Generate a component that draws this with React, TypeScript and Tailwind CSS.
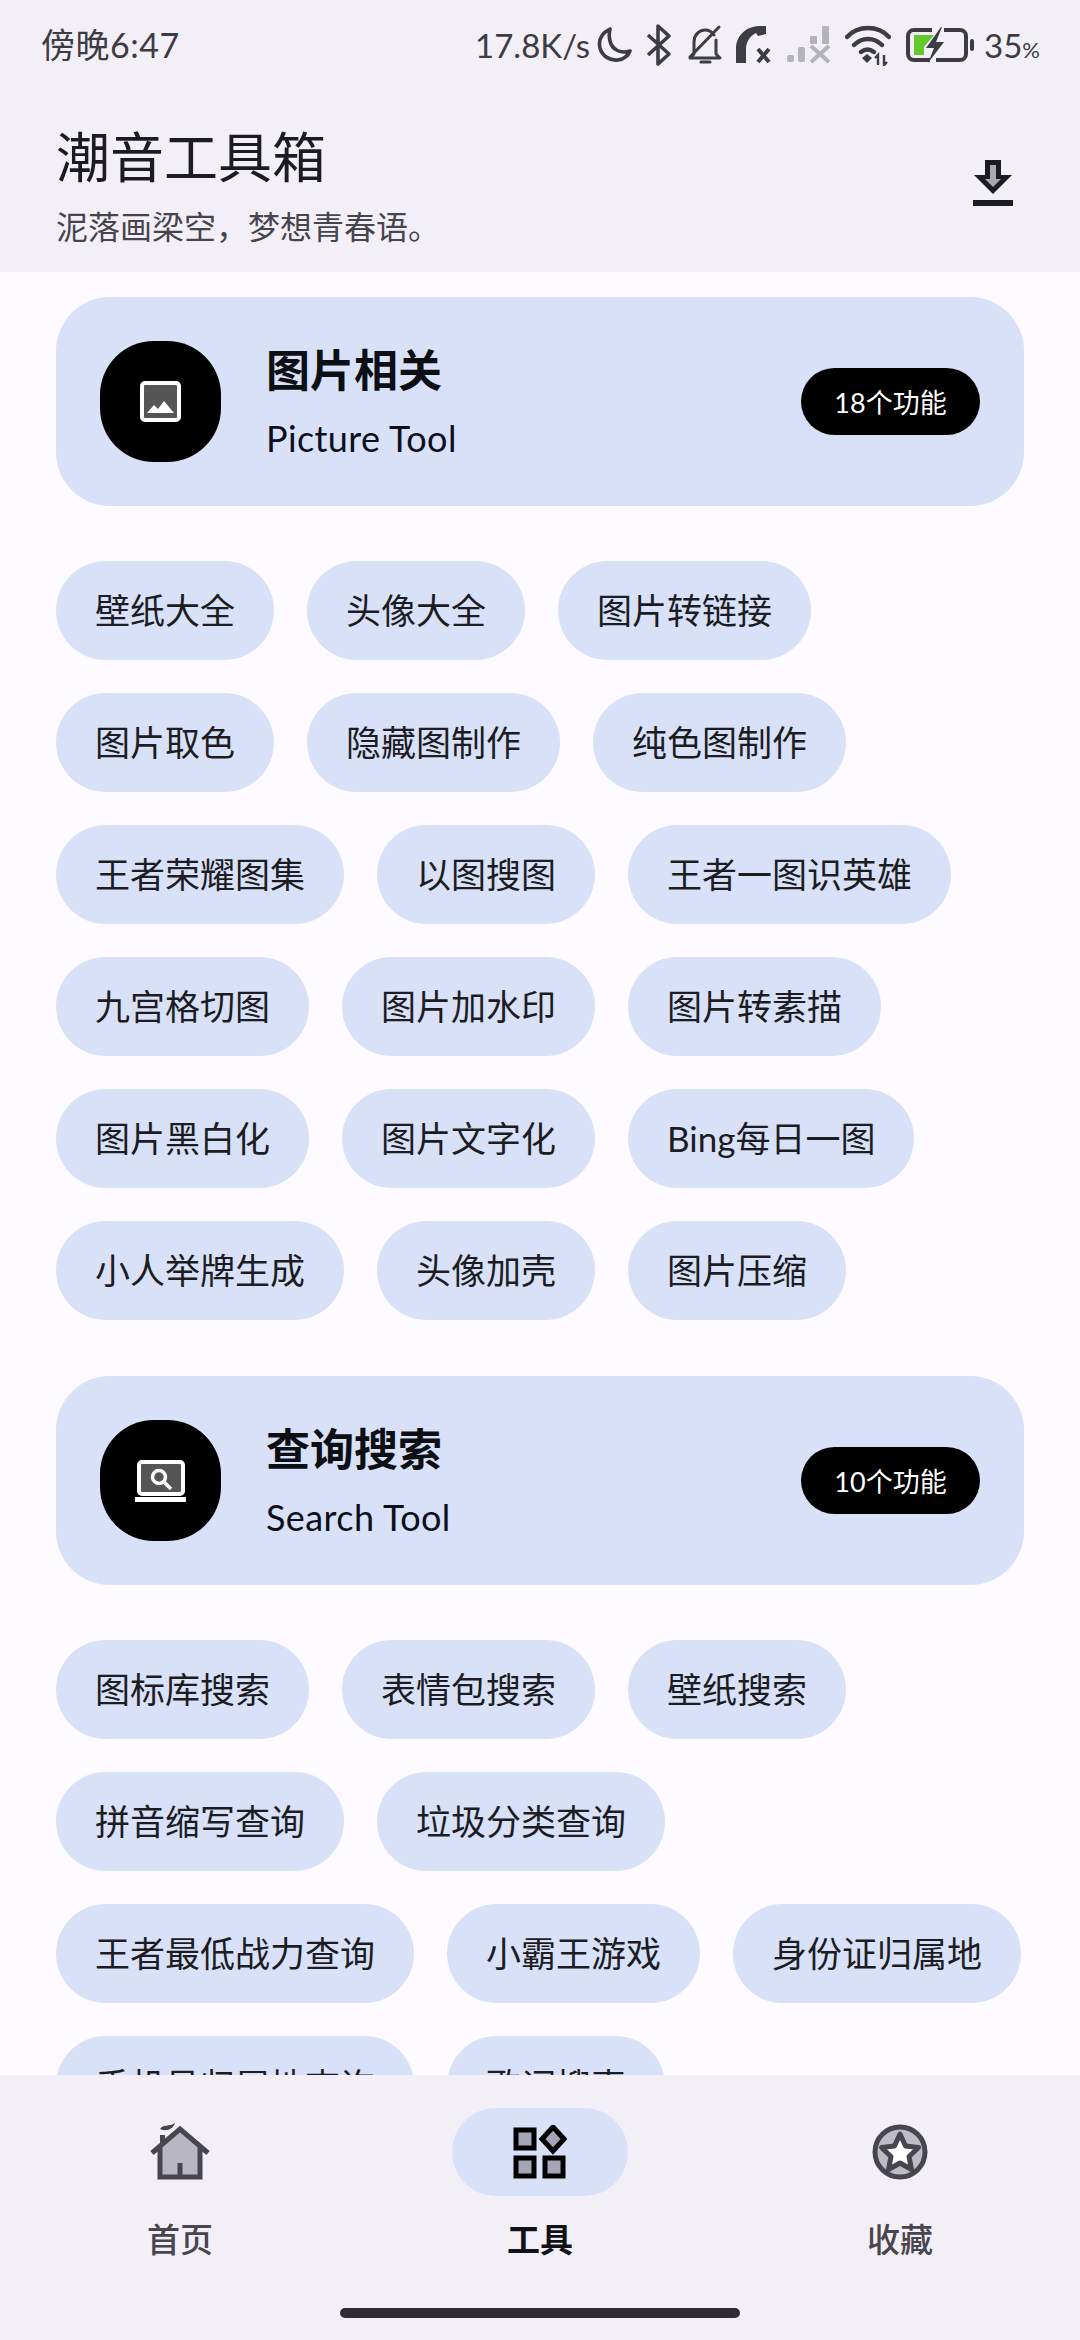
const pictureTools = [
  '壁纸大全', '头像大全', '图片转链接',
  '图片取色', '隐藏图制作', '纯色图制作',
  '王者荣耀图集', '以图搜图', '王者一图识英雄',
  '九宫格切图', '图片加水印', '图片转素描',
  '图片黑白化', '图片文字化', 'Bing每日一图',
  '小人举牌生成', '头像加壳', '图片压缩',
]

const searchTools = [
  '图标库搜索', '表情包搜索', '壁纸搜索',
  '拼音缩写查询', '垃圾分类查询',
  '王者最低战力查询', '小霸王游戏', '身份证归属地',
  '手机号归属地查询', '歌词搜索',
]

function StatusIcons() {
  return (
    <div className="flex items-center text-[#3d3b44]">
      <span className="text-[33px] leading-none w-[117px] whitespace-nowrap">17.8K/s</span>
      <svg className="ml-[4px]" width="37" height="38" viewBox="0 0 37 38" fill="none">
        <path d="M14 3C6 7 2 13 4 22c2 8 10 13 18 12 6-1 10-4 12-9-9 3-18-1-20-10-1-4-1-8 0-12Z" stroke="currentColor" strokeWidth="3.6" strokeLinejoin="round" />
      </svg>
      <svg className="ml-[12px]" width="27" height="44" viewBox="0 0 27 44" fill="none">
        <path d="M3 12 24 31 13 41V3l11 10L3 32" stroke="currentColor" strokeWidth="3.6" strokeLinejoin="round" />
      </svg>
      <svg className="ml-[15px]" width="36" height="42" viewBox="0 0 36 42" fill="none">
        <path d="M7 30V18C7 11 12 6 18 6c4 0 7 2 9 5M29 16v14l4 4H3l3-3M14 38h9M3 33 32 3" stroke="currentColor" strokeWidth="3" strokeLinecap="round" strokeLinejoin="round" />
      </svg>
      <svg className="ml-[12px]" width="37" height="40" viewBox="0 0 37 40">
        <path d="M1 38V24C1 12 9 2 24 1h7v8l-8 2-2-3c-6 3-10 9-10 16v14Z" fill="currentColor" />
        <path d="M23 24l11 13M34 24 23 37" stroke="currentColor" strokeWidth="4" />
      </svg>
      <svg className="ml-[15px]" width="46" height="38" viewBox="0 0 46 38" fill="#b4b2ba">
        <rect x="0" y="29" width="7" height="7" rx="2" />
        <rect x="11" y="21" width="7" height="15" rx="2" />
        <rect x="23" y="10" width="7" height="8" rx="1" />
        <rect x="35" y="0" width="7" height="18" rx="1" />
        <path d="M24 20l18 16M42 20 24 36" stroke="#b4b2ba" strokeWidth="4" />
      </svg>
      <svg className="ml-[12px]" width="46" height="42" viewBox="0 0 46 42" fill="none">
        <path d="M2 13C13 1 33 1 44 13M9 21c8-8 20-8 28 0M16 28c4-3 9-3 13 0" stroke="currentColor" strokeWidth="4.4" strokeLinecap="round" />
        <path d="m17 34 5-4 5 4-5 5Z" fill="currentColor" />
        <path d="M33 41V31l-3 3M39 31v10l3-3" stroke="currentColor" strokeWidth="2.4" />
      </svg>
      <svg className="ml-[15px]" width="68" height="38" viewBox="0 0 68 38" fill="none">
        <path d="M26 4H8a6 6 0 0 0-6 6v18a6 6 0 0 0 6 6h16M38 4h16a6 6 0 0 1 6 6v18a6 6 0 0 1-6 6H30" stroke="currentColor" strokeWidth="4" />
        <path d="M8 9h20l-10 12v8H8Z" fill="#65c82d" />
        <path d="M35 1 20 22h8l-6 15 16-21h-8l6-15Z" fill="currentColor" />
        <rect x="64" y="13" width="4" height="12" rx="2" fill="currentColor" />
      </svg>
      <span className="ml-[10px] text-[33px] leading-none">
        35<span className="text-[22px]">%</span>
      </span>
    </div>
  )
}

function ImageIcon() {
  return (
    <svg width="41" height="41" viewBox="0 0 41 41">
      <rect x="2" y="2" width="37" height="37" rx="3" fill="#555555" stroke="#fff" strokeWidth="4" />
      <path d="m7 32 7-8 4 4 6-8 10 12Z" fill="#fff" />
    </svg>
  )
}

function SearchIcon() {
  return (
    <svg width="52" height="42" viewBox="0 0 52 42">
      <rect x="4" y="2" width="44" height="32" rx="3" fill="#555555" stroke="#fff" strokeWidth="4" />
      <circle cx="24" cy="17" r="6.5" fill="none" stroke="#fff" strokeWidth="3.5" />
      <path d="m29 22 7 7" stroke="#fff" strokeWidth="3.5" />
      <rect x="0" y="37" width="51" height="5" fill="#fff" />
    </svg>
  )
}

function SectionCard({ icon, title, sub, count }: { icon: React.ReactNode; title: string; sub: string; count: string }) {
  return (
    <div className="flex items-center h-[209px] rounded-[54px] bg-[#d8e1f7] pl-[44px] pr-[44px]">
      <div className="flex items-center justify-center w-[121px] h-[121px] rounded-[54px] bg-black">{icon}</div>
      <div className="ml-[45px] flex-1">
        <div className="text-[44px] leading-[50px] font-bold text-[#0d0f14]">{title}</div>
        <div className="mt-[22px] text-[36px] leading-[42px] tracking-[0.4px] text-[#0d0f1c]">{sub}</div>
      </div>
      <div className="flex items-center justify-center w-[179px] h-[67px] pt-[3px] rounded-full bg-black text-white text-[27px]">{count}</div>
    </div>
  )
}

function ChipList({ items }: { items: string[] }) {
  return (
    <div className="flex flex-wrap gap-[33px] mt-[55px]">
      {items.map((item) => (
        <div key={item} className="flex items-center h-[99px] px-[39px] rounded-full bg-[#d8e1f8] text-[35px] text-[#1c1c22] whitespace-nowrap">
          {item}
        </div>
      ))}
    </div>
  )
}

export default function App() {
  return (
    <div className="flex flex-col h-[2340px] overflow-hidden bg-[#fdfbff] font-['Lato','Noto_Sans_CJK_SC',sans-serif]">
      <div className="bg-[#f3eff7]">
        <div className="flex items-center justify-between h-[90px] pl-[41px] pr-[40px]">
          <span className="text-[34px] leading-none tracking-[0.5px] text-[#3d3b44]">傍晚6:47</span>
          <StatusIcons />
        </div>
        <div className="flex items-start justify-between h-[182px] pl-[56px] pr-[66px]">
          <div>
            <div className="pt-[38px] text-[54px] leading-[60px] text-[#1c1b21]">潮音工具箱</div>
            <div className="mt-[19px] text-[32px] leading-[40px] text-[#46444d]">泥落画梁空，梦想青春语。</div>
          </div>
          <svg className="mt-[70px]" width="42" height="46" viewBox="0 0 42 46">
            <path d="M13 0h16v15h11L21 34 2 15h11Z" fill="#1c1b21" />
            <path d="M18 5h6v14h5l-8 8-8-8h5Z" fill="#a9a8ac" />
            <rect x="1" y="40" width="40" height="6" fill="#1c1b21" />
          </svg>
        </div>
      </div>

      <div className="flex-1 overflow-hidden px-[56px] pt-[25px]">
        <SectionCard icon={<ImageIcon />} title="图片相关" sub="Picture Tool" count="18个功能" />
        <ChipList items={pictureTools} />
        <div className="mt-[56px]">
          <SectionCard icon={<SearchIcon />} title="查询搜索" sub="Search Tool" count="10个功能" />
        </div>
        <ChipList items={searchTools} />
      </div>

      <div className="flex flex-col h-[265px] bg-[#f3eff7]">
        <div className="grid grid-cols-3 pt-[33px]">
          <div className="flex flex-col items-center">
            <div className="flex items-center justify-center h-[88px]">
              <svg width="60" height="58" viewBox="0 0 60 58">
                <path d="M10 26 30 8l20 18v28H10Z" fill="#b8b6bf" />
                <path d="M2 30 30 6l28 24M10 25v29h40V25M30 54V40" fill="none" stroke="#47454e" strokeWidth="5" />
                <path d="M10 20v-8h5v5M10 6c3-5 9-2 15-6-2 6-8 9-15 6Z" fill="#47454e" />
              </svg>
            </div>
            <div className="mt-[21px] text-[33px] leading-[44px] font-medium text-[#47454e]">首页</div>
          </div>
          <div className="flex flex-col items-center">
            <div className="flex items-center justify-center w-[176px] h-[88px] rounded-full bg-[#d8e1f8]">
              <svg width="54" height="54" viewBox="0 0 54 54">
                <rect x="3" y="5" width="18" height="18" fill="#a5a6b5" stroke="#000" strokeWidth="5" />
                <rect x="3" y="33" width="18" height="18" fill="#a5a6b5" stroke="#000" strokeWidth="5" />
                <rect x="32" y="33" width="18" height="18" fill="#a5a6b5" stroke="#000" strokeWidth="5" />
                <path d="m40 2 11 12-11 12-11-12Z" fill="#a5a6b5" stroke="#000" strokeWidth="5" />
              </svg>
            </div>
            <div className="mt-[21px] text-[33px] leading-[44px] font-bold text-[#111116]">工具</div>
          </div>
          <div className="flex flex-col items-center">
            <div className="flex items-center justify-center h-[88px]">
              <svg width="56" height="56" viewBox="0 0 56 56">
                <circle cx="28" cy="28" r="25" fill="#bdbbc4" stroke="#47454e" strokeWidth="5" />
                <path d="m28 10 5.5 12 13 1.500-9.500 9 2.500 13L28 39l-11.500 6.500 2.500-13-9.500-9 13-1.500Z" fill="#fff" stroke="#47454e" strokeWidth="5" strokeLinejoin="round" />
              </svg>
            </div>
            <div className="mt-[21px] text-[33px] leading-[44px] font-medium text-[#47454e]">收藏</div>
          </div>
        </div>
        <div className="self-center mt-[47px] w-[400px] h-[10px] rounded-full bg-[#2f2b31]" />
      </div>
    </div>
  )
}
